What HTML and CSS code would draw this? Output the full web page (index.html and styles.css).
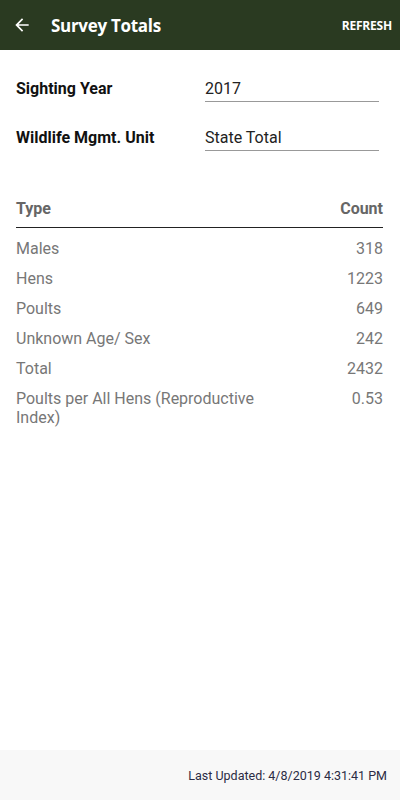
FILE: index.html
```html
<!DOCTYPE html>
<html lang="en">
<head>
  <meta charset="UTF-8" />
  <meta name="viewport" content="width=device-width" />
  <title>Survey Totals</title>
  <link rel="stylesheet" href="styles.css">
</head>
<body>
  <div class="app">
    <header class="toolbar">
      <svg class="back" width="20" height="20" viewBox="0 0 24 24">
        <path d="M20 11H7.83l5.59-5.59L12 4l-8 8 8 8 1.41-1.41L7.83 13H20v-2z" fill="#fff"/>
      </svg>
      <h1>Survey Totals</h1>
      <span class="refresh">REFRESH</span>
    </header>

    <main class="content">
      <div class="field">
        <label>Sighting Year</label>
        <div class="value">2017</div>
      </div>
      <div class="field">
        <label>Wildlife Mgmt. Unit</label>
        <div class="value">State Total</div>
      </div>

      <table class="totals">
        <thead>
          <tr>
            <th>Type</th>
            <th class="num">Count</th>
          </tr>
        </thead>
        <tbody>
          <tr><td>Males</td><td class="num">318</td></tr>
          <tr><td>Hens</td><td class="num">1223</td></tr>
          <tr><td>Poults</td><td class="num">649</td></tr>
          <tr><td>Unknown Age/ Sex</td><td class="num">242</td></tr>
          <tr><td>Total</td><td class="num">2432</td></tr>
          <tr><td>Poults per All Hens (Reproductive Index)</td><td class="num">0.53</td></tr>
        </tbody>
      </table>
    </main>

    <footer class="footer">Last Updated: 4/8/2019 4:31:41 PM</footer>
  </div>
</body>
</html>
```

FILE: styles.css
```css
body {
  margin: 0;
  font-family: Roboto, "Noto Sans", sans-serif;
  background: #fff;
}
.app {
  height: 800px;
  display: flex;
  flex-direction: column;
}
.toolbar {
  height: 50px;
  flex: none;
  background: #2a3a21;
  display: flex;
  align-items: center;
  padding: 0 8px 0 12px;
  color: #fff;
  box-sizing: border-box;
}
.back {
  margin-right: 19px;
}
.toolbar h1 {
  flex: 1;
  margin: 0;
  font-family: "Open Sans", sans-serif;
  font-size: 17px;
  font-weight: 700;
  letter-spacing: -0.3px;
}
.refresh {
  font-family: "Open Sans", sans-serif;
  font-size: 12px;
  font-weight: 700;
  letter-spacing: -0.2px;
}
.content {
  flex: 1;
  padding: 29px 17px 0 16px;
}
.field {
  display: flex;
  align-items: flex-end;
  margin-bottom: 26px;
}
.field label {
  width: 189px;
  font-size: 16px;
  font-weight: 700;
  color: #111;
  padding-bottom: 4px;
}
.field .value {
  width: 174px;
  font-size: 16px;
  line-height: 19px;
  color: #222;
  padding-bottom: 3px;
  border-bottom: 1px solid #999;
}
.totals {
  width: 100%;
  margin-top: 48px;
  border-collapse: collapse;
  font-size: 16px;
  color: #777;
}
.totals th {
  text-align: left;
  font-size: 16px;
  line-height: 19px;
  font-weight: 700;
  color: #666;
  padding: 0 0 9px;
  border-bottom: 1.5px solid #222;
}
.totals td {
  padding: 5px 0 6px;
  line-height: 19px;
  vertical-align: top;
}
.totals tbody tr:first-child td {
  padding-top: 11px;
}
.totals td.num {
  width: 110px;
}
.num {
  text-align: right;
}
.totals th.num {
  text-align: right;
}
.footer {
  height: 50px;
  flex: none;
  background: #f8f8f8;
  display: flex;
  align-items: center;
  justify-content: flex-end;
  padding: 0 13px 0 0;
  font-size: 12.5px;
  color: #2b2b44;
}
```
